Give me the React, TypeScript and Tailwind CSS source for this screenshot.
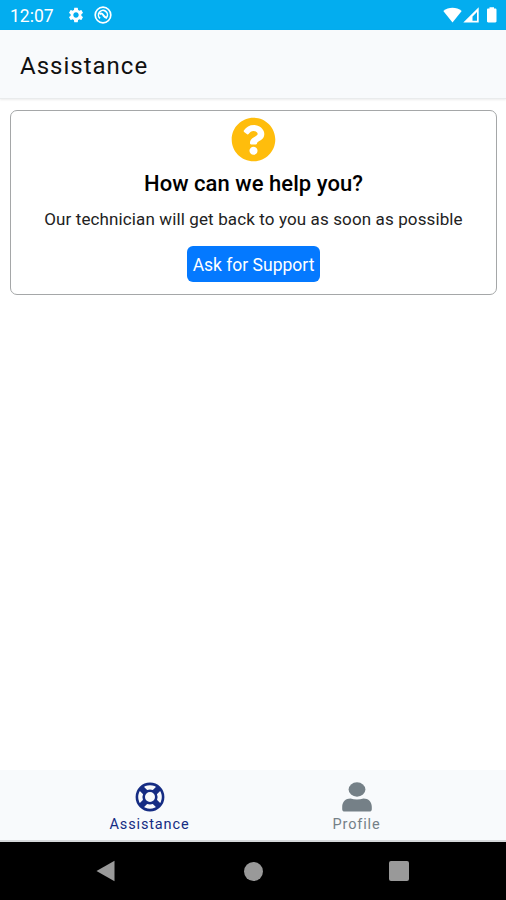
import { FaQuestionCircle } from "react-icons/fa";
import { MdSettings } from "react-icons/md";

function StatusBar() {
  return (
    <div className="flex h-[30px] shrink-0 items-center justify-between bg-[#03adef] pl-[10px] pr-[7px] text-white">
      <div className="flex items-center">
        <span className="w-[57px] pt-[3px] text-[17.5px] leading-none">12:07</span>
        <MdSettings size={18} />
        <svg className="ml-[9px]" width="18" height="18" viewBox="0 0 18 18" fill="none" stroke="currentColor">
          <circle cx="9" cy="9" r="7.8" strokeWidth="1.7" />
          <path d="M6.1 12.4A4.500 4.500 0 1 1 12.7 11.400" strokeWidth="1.6" />
          <path d="M5.500 8.100C7.700 6.600 8.700 8.200 9.600 9.600S11.600 11.700 13 12" strokeWidth="2" />
        </svg>
      </div>
      <svg width="56" height="18" viewBox="0 0 56 18" fill="currentColor">
        <path d="M0.300 5C5.500 0.600 13.500 0.600 18.700 5L9.500 16.400Z" />
        <path d="M20.300 16.500L35.700 1.300V16.500ZM29.500 14.800H34V6L29.500 10.500Z" fillRule="evenodd" />
        <path d="M46.500 2.500V1.200h4.500v1.300h1.300c.7 0 1.200.5 1.200 1.200v11.600c0 .7-.5 1.200-1.200 1.200h-7.100c-.7 0-1.200-.5-1.200-1.200V3.700c0-.7.5-1.200 1.200-1.200Z" />
      </svg>
    </div>
  );
}

function Header() {
  return (
    <header className="flex h-[69px] shrink-0 items-center border-b border-[#e9ebec] bg-[#f8fafc] px-5 pt-[3px] shadow-[0_1px_2px_rgba(0,0,0,0.08)]">
      <h1 className="text-[24px] leading-none tracking-[1px] text-[#111]">Assistance</h1>
    </header>
  );
}

function SupportCard() {
  return (
    <section className="mr-[9px] ml-[10px] mt-[11px] flex h-[185px] flex-col items-center rounded-[7px] border-[1.5px] border-[#a5a7a8] bg-white pt-[6px]">
      <FaQuestionCircle size={45} color="#ffbd0c" />
      <h2 className="mt-[8px] text-[22px] font-medium leading-[28px] tracking-[0.05px] whitespace-nowrap text-black">How can we help you?</h2>
      <p className="mt-[9px] text-[17px] leading-[24px] tracking-[0.120px] whitespace-nowrap text-[#222]">Our technician will get back to you as soon as possible</p>
      <button className="mt-[15px] flex h-[36px] w-[133px] items-center justify-center rounded-[6px] bg-[#0479ff] pt-[3px] text-[17.500px] whitespace-nowrap text-white">
        Ask for Support
      </button>
    </section>
  );
}

function LifeRingIcon() {
  return (
    <svg width="30" height="30" viewBox="0 0 30 30" fill="none" stroke="currentColor">
      <circle cx="15" cy="15" r="13.100" strokeWidth="2.600" />
      <circle cx="15" cy="15" r="6.300" strokeWidth="2.600" />
      <path d="M6 6L10.500 10.500M24 6L19.500 10.500M6 24L10.500 19.500M24 24L19.500 19.500" strokeWidth="6" />
    </svg>
  );
}

function PersonIcon() {
  return (
    <svg width="30" height="30" viewBox="0 0 30 30" fill="currentColor">
      <ellipse cx="15" cy="7.500" rx="8.400" ry="7.200" />
      <path d="M8.500 16.500C10.500 17.200 12.800 17.500 15 17.500s4.500-.3 6.500-1c5 0 8.300 3.300 8.300 8.300v2.400c0 1.500-1 2.400-2.500 2.400H2.700c-1.500 0-2.500-.9-2.500-2.400v-2.400c0-5 3.300-8.300 8.300-8.300Z" />
    </svg>
  );
}

function TabBar() {
  return (
    <nav className="flex h-[72px] shrink-0 justify-center border-b-2 border-[#d5d8da] bg-[#f8fafc] pt-[12px]">
      <div className="flex w-[207px] flex-col items-center text-[#152c83]">
        <LifeRingIcon />
        <span className="mt-[4px] text-[14.500px] leading-[17px] tracking-[0.850px]">Assistance</span>
      </div>
      <div className="flex w-[207px] flex-col items-center text-[#758087]">
        <PersonIcon />
        <span className="mt-[4px] text-[14.500px] leading-[17px] tracking-[0.850px]">Profile</span>
      </div>
    </nav>
  );
}

function NavigationBar() {
  return (
    <div className="flex h-[58px] shrink-0 items-center justify-between bg-black pl-[96px] pr-[97px] text-[#999]">
      <svg width="20" height="22" viewBox="0 0 20 22" fill="currentColor">
        <path d="M0.500 11L18.500 0.800V21.200Z" />
      </svg>
      <div className="ml-px size-[19px] rounded-full bg-[#999]" />
      <div className="size-[20px] rounded-[2px] bg-[#999]" />
    </div>
  );
}

export default function App() {
  return (
    <div className="flex h-[900px] w-[506px] flex-col overflow-hidden bg-white font-['Roboto',sans-serif]">
      <StatusBar />
      <Header />
      <main className="flex-1">
        <SupportCard />
      </main>
      <TabBar />
      <NavigationBar />
    </div>
  );
}
